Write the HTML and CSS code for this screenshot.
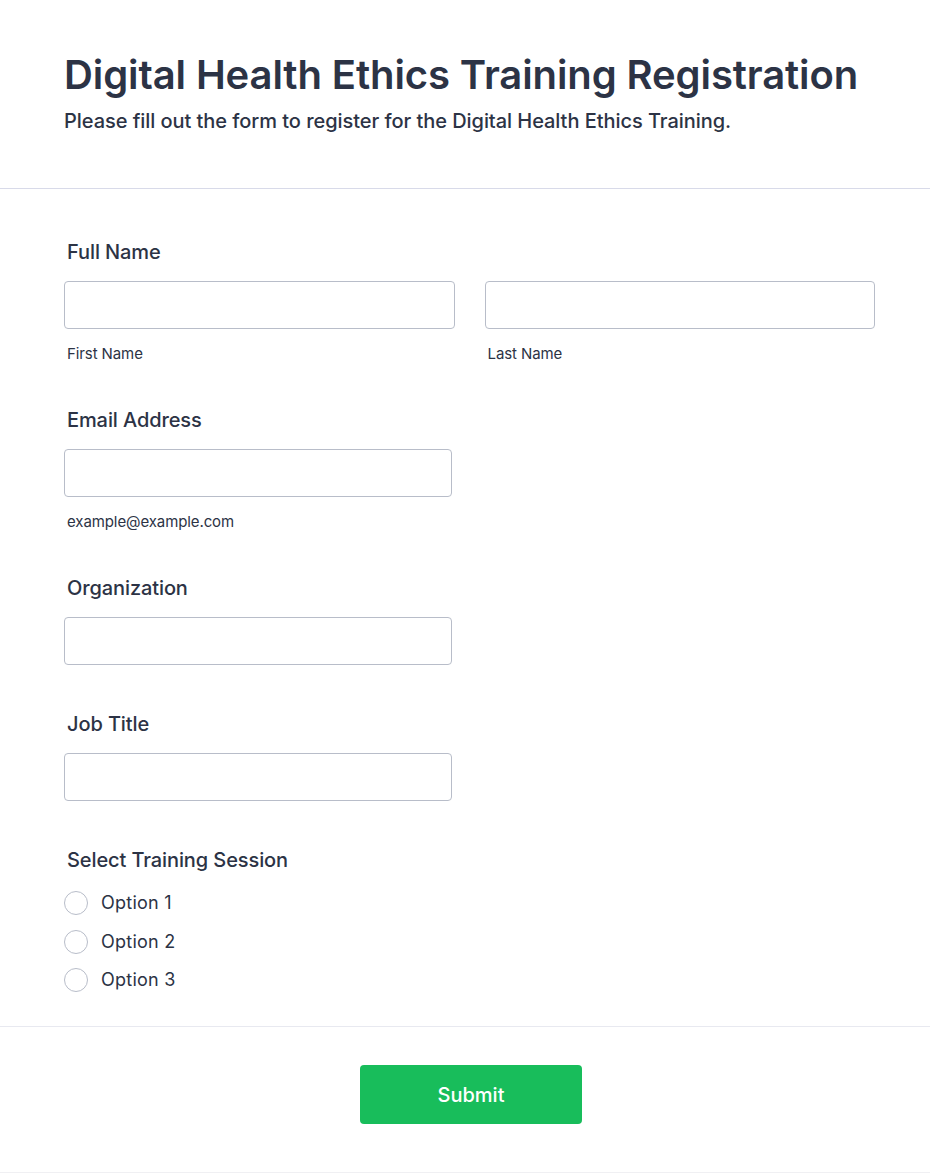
FILE: index.html
```html
<!DOCTYPE html>
<html lang="en">
<head>
<meta charset="utf-8">
<title>Digital Health Ethics Training Registration</title>
<link rel="stylesheet" href="styles.css">
</head>
<body>
<div class="page">
  <header class="form-header">
    <h1 class="title">Digital Health Ethics Training Registration</h1>
    <p class="subtitle">Please fill out the form to register for the Digital Health Ethics Training.</p>
  </header>
  <form class="form-body">
    <div class="field">
      <div class="label">Full Name</div>
      <div class="name-row">
        <div class="name-col">
          <input class="input" type="text">
          <div class="sublabel">First Name</div>
        </div>
        <div class="name-col">
          <input class="input" type="text">
          <div class="sublabel">Last Name</div>
        </div>
      </div>
    </div>
    <div class="field">
      <div class="label">Email Address</div>
      <input class="input short" type="email">
      <div class="sublabel">example@example.com</div>
    </div>
    <div class="field">
      <div class="label">Organization</div>
      <input class="input short" type="text">
    </div>
    <div class="field">
      <div class="label">Job Title</div>
      <input class="input short" type="text">
    </div>
    <div class="field last">
      <div class="label">Select Training Session</div>
      <div class="options">
        <label class="option"><span class="radio"></span><span class="option-text">Option 1</span></label>
        <label class="option"><span class="radio"></span><span class="option-text">Option 2</span></label>
        <label class="option"><span class="radio"></span><span class="option-text">Option 3</span></label>
      </div>
    </div>
  </form>
  <div class="form-footer">
    <button class="submit" type="button">Submit</button>
  </div>
</div>
</body>
</html>
```

FILE: styles.css
```css
* { box-sizing: border-box; }
html, body {
  margin: 0;
  padding: 0;
  background: #ffffff;
}
body {
  font-family: Inter, "Noto Sans", sans-serif;
  color: #2c3345;
}
.page {
  width: 930px;
  min-height: 1173px;
  border-bottom: 1px solid #f0f0f3;
}
.form-header {
  padding: 51px 64px 0;
  height: 189px;
  border-bottom: 1px solid #d8dae9;
}
.title {
  margin: 0;
  font-size: 40px;
  line-height: 48px;
  font-weight: 600;
  letter-spacing: -0.1px;
  color: #2c3345;
}
.subtitle {
  margin: 10px 0 0;
  font-size: 20px;
  line-height: 24px;
  font-weight: 500;
  letter-spacing: -0.05px;
  color: #2c3345;
}
.form-body {
  padding: 51px 55px 0 64px;
  border-bottom: 1px solid #e8e9f0;
}
.field {
  padding-bottom: 47px;
}
.field.last {
  padding-bottom: 34px;
}
.label {
  font-size: 20px;
  line-height: 24px;
  font-weight: 500;
  letter-spacing: -0.1px;
  padding-left: 3px;
  margin-bottom: 17px;
}
.name-row {
  display: flex;
  gap: 30px;
}
.name-col {
  flex: 1;
}
.input {
  display: block;
  width: 100%;
  height: 48px;
  border: 1px solid #b8bdc9;
  border-radius: 4px;
  background: #fff;
  margin: 0;
}
.input.short {
  width: 388px;
}
.sublabel {
  margin-top: 18px;
  font-size: 15px;
  line-height: 14px;
  padding-left: 3px;
  letter-spacing: -0.1px;
  color: #2c3345;
}
.options {
  display: flex;
  flex-direction: column;
  gap: 14.5px;
  padding-top: 2px;
}
.option {
  display: flex;
  align-items: center;
  height: 24px;
}
.radio {
  width: 24px;
  height: 24px;
  border: 1px solid #b8bdc9;
  border-radius: 50%;
  flex: none;
}
.option-text {
  margin-left: 13px;
  font-size: 18px;
  line-height: 24px;
  letter-spacing: 0.25px;
  color: #2c3345;
}
.form-footer {
  display: flex;
  justify-content: center;
  padding: 38px 0 0 12px;
}
.submit {
  width: 222px;
  height: 59px;
  border: none;
  border-radius: 4px;
  background: #18bd5b;
  color: #ffffff;
  font-family: Inter, "Noto Sans", sans-serif;
  font-size: 20px;
  font-weight: 500;
}
```
